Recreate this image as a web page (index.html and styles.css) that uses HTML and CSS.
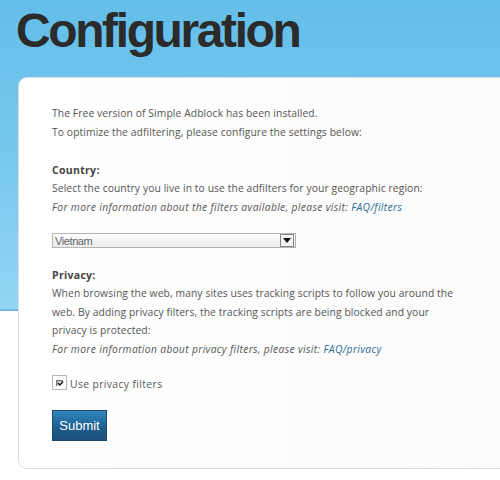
FILE: index.html
```html
<!DOCTYPE html>
<html>
<head>
<meta charset="utf-8">
<link rel="stylesheet" href="styles.css">
</head>
<body>
<h1 class="title">Configuration</h1>
<div class="card">
  <p class="text">The Free version of Simple Adblock has been installed.<br>To optimize the adfiltering, please configure the settings below:</p>
  <h2 class="label">Country:</h2>
  <p class="text">Select the country you live in to use the adfilters for your geographic region:<br><em>For more information about the filters available, please visit: <a class="link" href="#">FAQ/filters</a></em></p>
  <div class="select">
    <span class="select-value">Vietnam</span>
    <span class="select-btn"><svg width="8" height="5" viewBox="0 0 8 5"><path d="M0 0h8L4 5z" fill="#111"/></svg></span>
  </div>
  <h2 class="label">Privacy:</h2>
  <p class="text">When browsing the web, many sites uses tracking scripts to follow you around the web. By adding privacy filters, the tracking scripts are being blocked and your privacy is protected:<br><em>For more information about privacy filters, please visit: <a class="link" href="#">FAQ/privacy</a></em></p>
  <label class="check">
    <span class="box"><svg width="9" height="8" viewBox="0 0 9 8"><path d="M1 1h7v1.5H2.5V7H1z" fill="#777"/><path d="M3 4l1.8 2L8 2.5" stroke="#111" stroke-width="1.5" fill="none"/></svg></span>
    <span class="check-text">Use privacy filters</span>
  </label>
  <button class="submit">Submit</button>
</div>
</body>
</html>
```
FILE: styles.css
```css
html, body {
  margin: 0;
  padding: 0;
  overflow: hidden;
}
body {
  width: 500px;
  height: 480px;
  background: linear-gradient(to bottom, #63bee9 0, #78c8ee 150px, #92d5f5 309px, #6fb6df 309px, #6fb6df 311px, #ffffff 311px);
  font-family: "Open Sans", "Noto Sans", sans-serif;
}
.title {
  margin: 0;
  padding: 7px 0 0 16px;
  font-family: "Liberation Sans", Arial, sans-serif;
  font-weight: bold;
  font-size: 48px;
  line-height: 48px;
  letter-spacing: -2.4px;
  color: #2b2b2b;
}
.card {
  margin: 22px -20px 0 18px;
  padding: 26px 33px 26px;
  background: linear-gradient(to right, #ffffff, #fafafa);
  border: 1px solid #dcdcdc;
  border-radius: 9px;
  box-sizing: border-box;
  height: 392px;
}
.text {
  margin: 0;
  max-width: 410px;
  font-size: 10.3px;
  line-height: 18.5px;
  color: #555;
  letter-spacing: 0.1px;
}
.text em {
  color: #555;
  letter-spacing: 0.35px;
}
.link {
  color: #2e6b94;
  text-decoration: none;
}
.label {
  margin: 20px 0 0;
  font-size: 10.5px;
  line-height: 18px;
  font-weight: bold;
  color: #444;
  letter-spacing: 0.3px;
}
.select {
  margin: 17px 0 -2px;
  width: 244px;
  height: 15px;
  box-sizing: border-box;
  border: 1px solid #b4b4b4;
  background: linear-gradient(to bottom, #fdfdfd, #ececec);
  display: flex;
  align-items: center;
  justify-content: space-between;
}
.select-value {
  font-family: "Liberation Sans", Arial, sans-serif;
  font-size: 11px;
  color: #666;
  padding-left: 2px;
  letter-spacing: -0.4px;
}
.select-btn {
  width: 12px;
  height: 11px;
  margin-right: 1px;
  border: 1px solid #888;
  background: #f2f2f2;
  display: flex;
  align-items: center;
  justify-content: center;
}
.check {
  margin-top: 16px;
  display: flex;
  align-items: center;
  gap: 3px;
}
.box {
  width: 15px;
  height: 15px;
  box-sizing: border-box;
  border: 1px solid #b8b8b8;
  background: #fff;
  display: flex;
  align-items: center;
  justify-content: center;
}
.check-text {
  font-size: 10.3px;
  color: #555;
  letter-spacing: 0.4px;
  padding-top: 3px;
}
.submit {
  display: block;
  margin-top: 19px;
  width: 55px;
  height: 31px;
  border: 1px solid #1c4a6e;
  background: linear-gradient(to bottom, #2f86bf, #1d5d8d 60%, #1a4f78);
  color: #fff;
  font-family: "Liberation Sans", Arial, sans-serif;
  font-size: 13px;
  padding: 0;
}
```
